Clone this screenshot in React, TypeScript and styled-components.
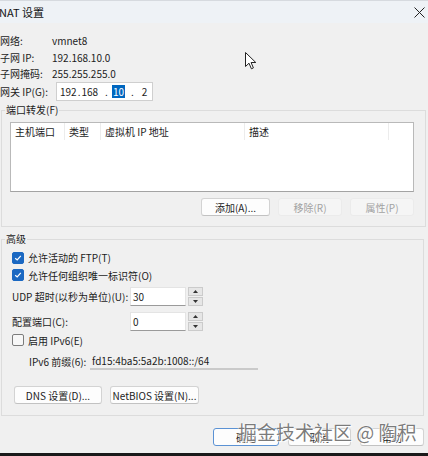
import React from "react";
import styled, { createGlobalStyle } from "styled-components";

const GlobalStyle = createGlobalStyle`
  html, body {
    margin: 0;
    padding: 0;
    background: #f0f0f0;
  }
  body {
    font-family: "Noto Sans CJK SC", "Noto Sans", sans-serif;
  }
`;

const Window = styled.div`
  position: relative;
  width: 428px;
  height: 456px;
  overflow: hidden;
  background: #f0f0f0;
  color: #1c1c1c;
  font-size: 10px;
  display: flex;
  flex-direction: column;
`;

const TitleBar = styled.div`
  flex: none;
  height: 23px;
  box-sizing: border-box;
  display: flex;
  align-items: center;
  justify-content: space-between;
  padding: 0 2px 0 0;
  background: #eef2f6;
  border-top: 1px solid #d6dadf;
  font-size: 11px;
  color: #111;
`;

const Title = styled.span`
  margin-left: -1px;
`;

const CloseButton = styled.span`
  display: flex;
  width: 14px;
  height: 14px;
  align-items: center;
  justify-content: center;
`;

const InfoList = styled.div`
  display: flex;
  flex-direction: column;
  padding-top: 9px;
`;

const InfoRow = styled.div<{ $h: number }>`
  display: flex;
  align-items: center;
  height: ${p => p.$h}px;
`;

const InfoLabel = styled.span`
  width: 52px;
  flex: none;
  white-space: nowrap;
`;

const IpField = styled.div`
  margin-left: 4px;
  width: 97px;
  height: 19px;
  box-sizing: border-box;
  background: #fff;
  border: 1px solid #cfcfcf;
  display: flex;
  align-items: center;
  padding-left: 2px;
  font-size: 10px;
`;

const Octet = styled.span<{ $ml: number; $sel?: boolean }>`
  margin-left: ${p => p.$ml}px;
  line-height: 13px;
  ${p => p.$sel && `
    background: #0067c0;
    color: #fff;
    padding: 0 1px;
  `}
`;

const Group = styled.fieldset<{ $mr: number; $mt: number }>`
  margin: ${p => p.$mt}px ${p => p.$mr}px 0 1px;
  padding: 0;
  border: 1px solid #dcdcdc;
  min-inline-size: 0;
`;

const Legend = styled.legend`
  margin-left: 3px;
  padding: 0 1px;
  line-height: 14px;
`;

const GroupBody = styled.div<{ $pt: number; $pr: number; $pb: number }>`
  display: flex;
  flex-direction: column;
  padding: ${p => p.$pt}px ${p => p.$pr}px ${p => p.$pb}px 8px;
`;

const ListBox = styled.div`
  height: 70px;
  box-sizing: border-box;
  background: #fff;
  border: 1px solid #b9b9b9;
  border-bottom-color: #a3a3a3;
`;

const ListHeader = styled.div`
  display: flex;
  height: 17px;
`;

const HeaderCell = styled.div<{ $w: number }>`
  width: ${p => p.$w}px;
  flex: none;
  box-sizing: border-box;
  padding-left: 4px;
  display: flex;
  align-items: center;
  border-right: 1px solid #ececec;
`;

const ButtonRow = styled.div<{ $mt: number; $gap: number; $end?: boolean; $ml?: number }>`
  display: flex;
  justify-content: ${p => (p.$end ? "flex-end" : "flex-start")};
  gap: ${p => p.$gap}px;
  margin-top: ${p => p.$mt}px;
  padding-left: ${p => p.$ml ?? 0}px;
`;

const Button = styled.button<{ $w: number; $disabled?: boolean; $primary?: boolean }>`
  width: ${p => p.$w}px;
  height: 18px;
  box-sizing: border-box;
  padding: 0;
  font-family: inherit;
  font-size: 10px;
  white-space: nowrap;
  border-radius: 3px;
  background: ${p => (p.$disabled ? "#f5f5f5" : "#fdfdfd")};
  color: ${p => (p.$disabled ? "#a2a2a2" : "#1c1c1c")};
  border: 1px solid ${p => (p.$disabled ? "#ebebeb" : p.$primary ? "#5b92d4" : "#d3d3d3")};
  border-bottom-color: ${p => (p.$disabled ? "#ebebeb" : p.$primary ? "#5b92d4" : "#c2c2c2")};
`;

const CheckRow = styled.div<{ $h: number; $indent?: number }>`
  display: flex;
  align-items: center;
  gap: 4px;
  height: ${p => p.$h}px;
  padding-left: ${p => p.$indent ?? 2}px;
`;

const CheckBox = styled.span<{ $checked: boolean }>`
  width: 12px;
  height: 12px;
  box-sizing: border-box;
  border-radius: 2px;
  display: flex;
  align-items: center;
  justify-content: center;
  background: ${p => (p.$checked ? "#1a68c2" : "#f7f7f7")};
  border: 1px solid ${p => (p.$checked ? "#1a68c2" : "#7c7c7c")};
`;

const FieldRow = styled.div<{ $h: number; $mt: number; $indent: number }>`
  display: flex;
  align-items: center;
  height: ${p => p.$h}px;
  margin-top: ${p => p.$mt}px;
  padding-left: ${p => p.$indent}px;
`;

const FieldLabel = styled.span<{ $w: number }>`
  width: ${p => p.$w}px;
  flex: none;
  white-space: nowrap;
`;

const NumberInput = styled.div`
  width: 56px;
  height: 19px;
  box-sizing: border-box;
  background: #fff;
  border: 1px solid #e4e4e4;
  border-bottom-color: #9a9a9a;
  padding-left: 2px;
  display: flex;
  align-items: center;
`;

const Spinner = styled.div`
  margin-left: 2px;
  width: 15px;
  height: 19px;
  display: flex;
  flex-direction: column;
  gap: 1px;
`;

const SpinHalf = styled.span`
  flex: 1;
  background: #e6e6e6;
  border: 1px solid #cbcbcb;
  display: flex;
  align-items: center;
  justify-content: center;
`;

const PrefixField = styled.div`
  width: 168px;
  height: 18px;
  box-sizing: border-box;
  padding-left: 2px;
  display: flex;
  align-items: center;
  border-bottom: 2px solid #cacaca;
`;

const Footer = styled.div`
  display: flex;
  justify-content: flex-end;
  gap: 9px;
  margin: 12px 4px 0 0;
`;

const BottomEdge = styled.div`
  margin-top: auto;
  height: 3px;
  background: #1a1a1a;
`;

const Watermark = styled.div`
  position: absolute;
  left: 238px;
  top: 418px;
  font-size: 19px;
  color: rgba(80, 80, 80, 0.75);
  text-shadow: 0 0 1px #fff, 0 0 2px #fff, 1px 1px 1px #fff;
  white-space: nowrap;
`;

const Cursor = styled.svg`
  position: absolute;
  left: 245px;
  top: 52px;
`;

const Check = () => (
  <svg width="8" height="8" viewBox="0 0 8 8">
    <path d="M1.2 4.2 L3.2 6 L6.8 1.8" fill="none" stroke="#fff" strokeWidth="1.2" />
  </svg>
);

const Arrow = ({ up }: { up: boolean }) => (
  <svg width="5" height="3" viewBox="0 0 5 3">
    <path d={up ? "M0 3 L2.5 0 L5 3 Z" : "M0 0 L2.5 3 L5 0 Z"} fill="#333" />
  </svg>
);

export default function App() {
  return (
    <>
      <GlobalStyle />
      <Window>
        <TitleBar>
          <Title>NAT 设置</Title>
          <CloseButton>
            <svg width="11" height="11" viewBox="0 0 11 11">
              <path d="M0.5 0.5 L10.5 10.5 M10.5 0.5 L0.5 10.5" stroke="#222" strokeWidth="1" />
            </svg>
          </CloseButton>
        </TitleBar>

        <InfoList>
          <InfoRow $h={17}>
            <InfoLabel>网络:</InfoLabel>
            <span>vmnet8</span>
          </InfoRow>
          <InfoRow $h={16}>
            <InfoLabel>子网 IP:</InfoLabel>
            <span>192.168.10.0</span>
          </InfoRow>
          <InfoRow $h={16}>
            <InfoLabel>子网掩码:</InfoLabel>
            <span>255.255.255.0</span>
          </InfoRow>
          <InfoRow $h={21}>
            <InfoLabel>网关 IP(G):</InfoLabel>
            <IpField>
              <Octet $ml={1}>192</Octet>
              <Octet $ml={1}>.</Octet>
              <Octet $ml={1}>168</Octet>
              <Octet $ml={7}>.</Octet>
              <Octet $ml={4} $sel>10</Octet>
              <Octet $ml={6}>.</Octet>
              <Octet $ml={8}>2</Octet>
            </IpField>
          </InfoRow>
        </InfoList>

        <Group $mt={1} $mr={2}>
          <Legend>端口转发(F)</Legend>
          <GroupBody $pt={5} $pr={11} $pb={10}>
            <ListBox>
              <ListHeader>
                <HeaderCell $w={54}>主机端口</HeaderCell>
                <HeaderCell $w={36}>类型</HeaderCell>
                <HeaderCell $w={144}>虚拟机 IP 地址</HeaderCell>
                <HeaderCell $w={144}>描述</HeaderCell>
              </ListHeader>
            </ListBox>
            <ButtonRow $mt={6} $gap={8} $end>
              <Button $w={69}>添加(A)...</Button>
              <Button $w={64} $disabled>移除(R)</Button>
              <Button $w={64} $disabled>属性(P)</Button>
            </ButtonRow>
          </GroupBody>
        </Group>

        <Group $mt={5} $mr={4}>
          <Legend>高级</Legend>
          <GroupBody $pt={3} $pr={8} $pb={11}>
            <CheckRow $h={17}>
              <CheckBox $checked><Check /></CheckBox>
              <span>允许活动的 FTP(T)</span>
            </CheckRow>
            <CheckRow $h={18}>
              <CheckBox $checked><Check /></CheckBox>
              <span>允许任何组织唯一标识符(O)</span>
            </CheckRow>
            <FieldRow $h={19} $mt={3} $indent={2}>
              <FieldLabel $w={118}>UDP 超时(以秒为单位)(U):</FieldLabel>
              <NumberInput>30</NumberInput>
              <Spinner>
                <SpinHalf><Arrow up /></SpinHalf>
                <SpinHalf><Arrow up={false} /></SpinHalf>
              </Spinner>
            </FieldRow>
            <FieldRow $h={19} $mt={6} $indent={2}>
              <FieldLabel $w={118}>配置端口(C):</FieldLabel>
              <NumberInput>0</NumberInput>
              <Spinner>
                <SpinHalf><Arrow up /></SpinHalf>
                <SpinHalf><Arrow up={false} /></SpinHalf>
              </Spinner>
            </FieldRow>
            <CheckRow $h={18} $indent={2}>
              <CheckBox $checked={false} />
              <span>启用 IPv6(E)</span>
            </CheckRow>
            <FieldRow $h={18} $mt={3} $indent={19}>
              <FieldLabel $w={61}>IPv6 前缀(6):</FieldLabel>
              <PrefixField>fd15:4ba5:5a2b:1008::/64</PrefixField>
            </FieldRow>
            <ButtonRow $mt={16} $gap={8} $ml={4}>
              <Button $w={88}>DNS 设置(D)...</Button>
              <Button $w={89}>NetBIOS 设置(N)...</Button>
            </ButtonRow>
          </GroupBody>
        </Group>

        <Footer>
          <Button $w={66} $primary>确定</Button>
          <Button $w={63}>取消</Button>
          <Button $w={64}>帮助</Button>
        </Footer>

        <BottomEdge />

        <Watermark>掘金技术社区 @ 陶积</Watermark>

        <Cursor width="12" height="18" viewBox="0 0 12 18">
          <path d="M0.5 0.5 L0.5 14.5 L4 11.2 L6.4 16.8 L8.4 15.9 L6.1 10.5 L10.8 10.5 Z" fill="#fff" stroke="#222" strokeWidth="1" strokeLinejoin="round" />
        </Cursor>
      </Window>
    </>
  );
}
